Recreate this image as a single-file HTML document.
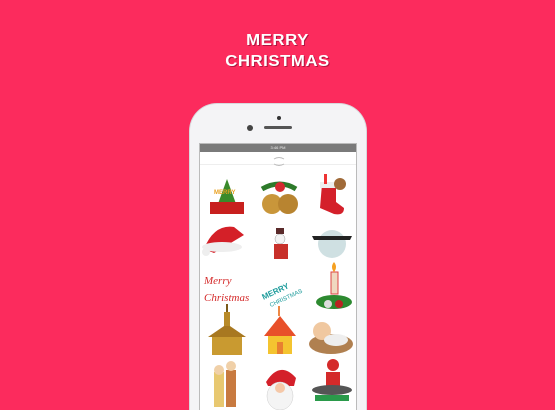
<!DOCTYPE html>
<html style="overflow:hidden;height:410px"><head><style>
body{margin:0;width:555px;height:410px;background:#fc2b5d;overflow:hidden;position:relative;font-family:"Liberation Sans",sans-serif}
.t{position:absolute;left:0;width:555px;text-align:center;color:#fff;font-weight:bold;font-size:16px;letter-spacing:0.5px;text-shadow:1px 1px 0 #b01640;transform:scaleX(1.05)}
.phone{position:absolute;left:189px;top:103px;width:178px;height:307px;background:#f4f4f6;border-radius:28px 28px 0 0;border:1px solid #d8d8dc;border-bottom:none;box-sizing:border-box}
.screen{position:absolute;left:199px;top:143px;width:158px;height:267px;background:#fff;border:1px solid #bbb;border-bottom:none;box-sizing:border-box;overflow:hidden}
.sb{position:absolute;left:0;top:0;width:100%;height:8px;background:#7a7a7a;color:#eee;font-size:4px;text-align:center;line-height:8px}
</style></head><body>
<div class="t" style="top:32px">MERRY</div>
<div class="t" style="top:53px">CHRISTMAS</div>
<div class="phone"></div>
<div style="position:absolute;left:277px;top:116px;width:4px;height:4px;border-radius:50%;background:#333"></div>
<div style="position:absolute;left:247px;top:125px;width:6px;height:6px;border-radius:50%;background:#444"></div>
<div style="position:absolute;left:264px;top:126px;width:28px;height:3px;border-radius:2px;background:#555"></div>
<div class="screen"><div class="sb">3:46 PM</div>
<div style="position:absolute;left:0;top:20px;width:100%;height:1px;background:#eee"></div>
<svg width="158" height="280" style="position:absolute;left:0;top:0">
<path d="M74 15 q5 -3 10 0 M74 20 q5 3 10 0" stroke="#bbb" fill="none"/>
<polygon points="27,35 15,68 39,68" fill="#3a8a2a"/><rect x="10" y="58" width="34" height="12" fill="#c8201e"/><text x="14" y="50" font-size="6" fill="#e8a020" font-weight="bold">MERRY</text>
<circle cx="72" cy="60" r="10" fill="#c9963a"/><circle cx="88" cy="60" r="10" fill="#b88430"/><path d="M62 45 q18 -10 34 0" stroke="#2d7a2a" stroke-width="5" fill="none"/><circle cx="80" cy="43" r="5" fill="#d42a30"/>
<path d="M122 40 h14 v18 l8 6 q0 8 -10 6 l-14 -6 z" fill="#d4202a"/><rect x="120" y="38" width="18" height="6" fill="#eee"/><circle cx="140" cy="40" r="6" fill="#a06a38"/><rect x="124" y="30" width="3" height="10" fill="#e33"/>
<path d="M4 105 q10 -25 30 -22 l10 8 -30 18 z" fill="#d42028"/><ellipse cx="22" cy="103" rx="20" ry="5" fill="#eee"/><circle cx="6" cy="108" r="4" fill="#eee"/>
<circle cx="80" cy="95" r="5" fill="#f4f4f4" stroke="#999" stroke-width=".5"/><rect x="76" y="84" width="8" height="6" fill="#5a2a2a"/><rect x="74" y="100" width="14" height="15" fill="#c8302a"/>
<circle cx="132" cy="100" r="14" fill="#cfe0e2"/><path d="M112 92 h40 l-2 4 h-36 z" fill="#222"/>
<text x="4" y="140" font-size="11" fill="#d42a2a" font-style="italic" font-family="Liberation Serif">Merry</text><text x="4" y="157" font-size="11" fill="#d42a2a" font-style="italic" font-family="Liberation Serif">Christmas</text>
<text x="60" y="150" font-size="8" fill="#1a9a9a" font-weight="bold" transform="rotate(-25 75 145)">MERRY</text><text x="66" y="158" font-size="6" fill="#1a9a9a" transform="rotate(-25 80 150)">CHRISTMAS</text>
<rect x="131" y="128" width="7" height="22" fill="#f0d8c0" stroke="#d44" stroke-width="1"/><path d="M134 118 q4 5 0 10 q-4 -5 0 -10" fill="#f5a020"/><ellipse cx="134" cy="158" rx="18" ry="7" fill="#2d8a30"/><circle cx="128" cy="160" r="4" fill="#ddd"/><circle cx="139" cy="160" r="4" fill="#b22"/>
<rect x="12" y="193" width="30" height="18" fill="#c99a30"/><polygon points="8,193 27,180 46,193" fill="#a87820"/><rect x="24" y="168" width="6" height="14" fill="#b88a28"/><rect x="26" y="160" width="2" height="8" fill="#7a5a1a"/>
<rect x="68" y="190" width="24" height="20" fill="#f4c430"/><polygon points="64,192 80,172 96,192" fill="#e8502a"/><rect x="78" y="162" width="2" height="10" fill="#e84"/><rect x="77" y="198" width="6" height="12" fill="#e88030"/>
<ellipse cx="131" cy="200" rx="22" ry="10" fill="#b08050"/><circle cx="122" cy="187" r="9" fill="#f0c8a0"/><ellipse cx="136" cy="196" rx="12" ry="6" fill="#eee"/>
<rect x="14" y="228" width="10" height="35" fill="#e8c870"/><rect x="26" y="226" width="10" height="37" fill="#c87a40"/><circle cx="19" cy="226" r="5" fill="#f0d0a8"/><circle cx="31" cy="222" r="5" fill="#f0d0a8"/>
<path d="M66 238 q14 -22 30 -4 l-2 8 h-26 z" fill="#d4202a"/><ellipse cx="80" cy="252" rx="13" ry="14" fill="#f4f4f4" stroke="#ccc" stroke-width=".5"/><circle cx="80" cy="244" r="5" fill="#f5c8a8"/>
<circle cx="133" cy="221" r="6" fill="#d42a2a"/><rect x="126" y="228" width="14" height="14" fill="#d42a2a"/><ellipse cx="132" cy="246" rx="20" ry="5" fill="#555"/><rect x="115" y="251" width="34" height="6" fill="#2a9a4a"/>
</svg>
</div>
</body></html>
